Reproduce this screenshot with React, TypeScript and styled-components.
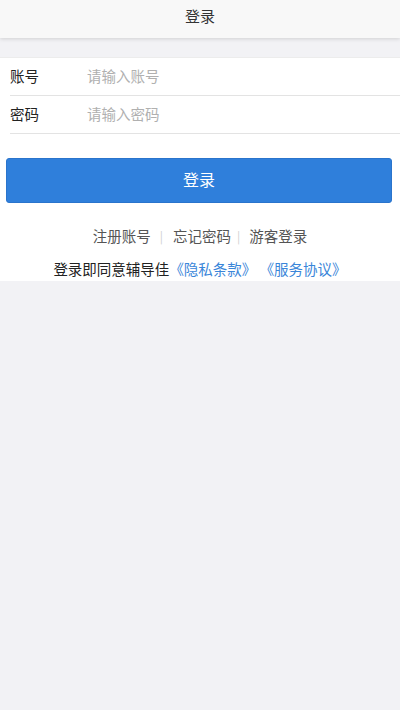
import React from "react";
import styled, { createGlobalStyle } from "styled-components";

const Global = createGlobalStyle`
  html, body { margin: 0; padding: 0; background: #f2f2f5; }
  body { font-family: "Noto Sans CJK SC", "Noto Sans", sans-serif; }
  * { box-sizing: border-box; }
`;

const Page = styled.div`
  min-height: 710px;
  background: #f2f2f5;
  display: flex;
  flex-direction: column;
`;

const Header = styled.header`
  height: 38px;
  padding-bottom: 7px;
  background: #f8f8f8;
  box-shadow: 0 1px 4px rgba(0, 0, 0, 0.14);
  display: flex;
  align-items: center;
  justify-content: center;
  font-size: 15px;
  color: #333;
  position: relative;
  z-index: 1;
`;

const Panel = styled.section`
  margin-top: 19px;
  background: #fff;
  border-top: 1px solid #ececec;
  display: flex;
  flex-direction: column;
  padding-bottom: 1px;
`;

const Row = styled.label`
  height: 38px;
  margin-left: 10px;
  padding-bottom: 3px;
  border-bottom: 1px solid #e3e3e3;
  display: flex;
  align-items: center;
`;

const Label = styled.span`
  width: 77px;
  font-size: 14.5px;
  color: #222;
`;

const Input = styled.input`
  flex: 1;
  border: none;
  outline: none;
  background: transparent;
  font-family: inherit;
  font-size: 14.5px;
  color: #222;
  padding: 0;
  &::placeholder { color: #b0b0b0; }
`;

const Button = styled.button`
  margin: 24px 8px 0 6px;
  height: 45px;
  padding: 0 0 4px;
  border: 1px solid #2a74cc;
  border-radius: 3px;
  background: #2f7fdb;
  color: #fff;
  font-family: inherit;
  font-size: 16px;
  cursor: pointer;
`;

const Links = styled.div`
  margin-top: 22px;
  display: flex;
  justify-content: center;
  align-items: center;
  line-height: 22px;
  font-size: 14.5px;
  color: #555;
`;

const Sep = styled.span<{ $l: number; $r: number }>`
  color: #d0d0d0;
  font-size: 12px;
  margin: 0 ${(p) => p.$r}px 0 ${(p) => p.$l}px;
`;

const Agreement = styled.p`
  margin: 11px 0 0;
  text-align: center;
  line-height: 22px;
  font-size: 14.5px;
  color: #222;
`;

const Link = styled.span`
  color: #3a86d9;
`;

export default function App() {
  return (
    <Page>
      <Global />
      <Header>登录</Header>
      <Panel>
        <Row>
          <Label>账号</Label>
          <Input placeholder="请输入账号" />
        </Row>
        <Row>
          <Label>密码</Label>
          <Input type="password" placeholder="请输入密码" />
        </Row>
        <Button>登录</Button>
        <Links>
          <span>注册账号</span>
          <Sep $l={9} $r={10}>|</Sep>
          <span>忘记密码</span>
          <Sep $l={6} $r={9}>|</Sep>
          <span>游客登录</span>
        </Links>
        <Agreement>
          登录即同意辅导佳<Link>《隐私条款》</Link> <Link>《服务协议》</Link>
        </Agreement>
      </Panel>
    </Page>
  );
}
